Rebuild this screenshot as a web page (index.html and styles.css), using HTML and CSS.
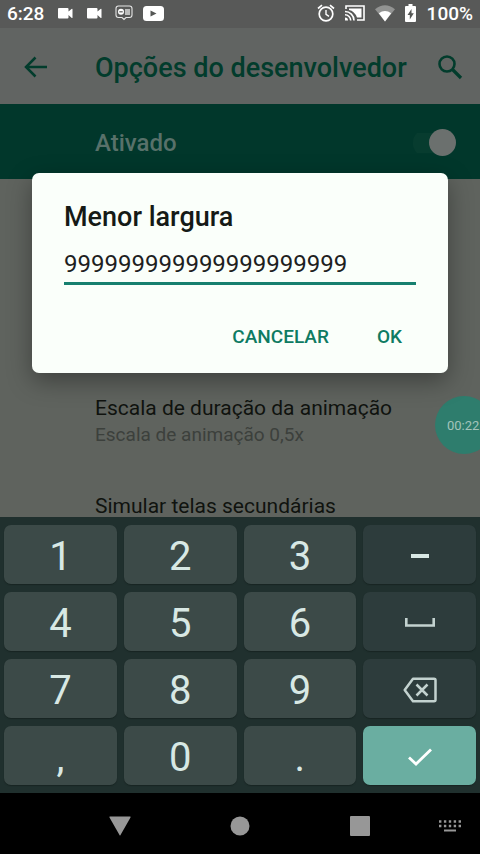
FILE: index.html
```html
<!DOCTYPE html>
<html lang="pt-BR">
<head>
<meta charset="utf-8">
<meta name="viewport" content="width=device-width, initial-scale=1">
<title>Opções do desenvolvedor</title>
<link rel="stylesheet" href="styles.css">
</head>
<body>
<div class="screen">
  <header class="status">
    <span class="clock">6:28</span>
    <svg class="cam" viewBox="0 0 15 11" width="15" height="11"><path d="M1 0h8.500q1 0 1 1v2.500L13.500 1q1-.6 1 .4v8q0 1-1 .4L10.500 7v2.500q0 1-1 1H1q-1 0-1-1V1q0-1 1-1z" fill="currentColor"/></svg>
    <svg class="cam" viewBox="0 0 15 11" width="15" height="11"><path d="M1 0h8.500q1 0 1 1v2.500L13.500 1q1-.6 1 .4v8q0 1-1 .4L10.500 7v2.500q0 1-1 1H1q-1 0-1-1V1q0-1 1-1z" fill="currentColor"/></svg>
    <svg class="chat" viewBox="0 0 18 16" width="18" height="16"><path d="M3.500 1h11Q17 1 17 3.500v6.500q0 2.500-2.500 2.500h-3.500L9 14.500 7 12.500H3.500Q1 12.500 1 10V3.500Q1 1 3.500 1z" fill="none" stroke="currentColor" stroke-width="1.100" opacity=".85"/><circle cx="6" cy="6.800" r="3" fill="currentColor"/><path d="M4.300 6.800h3.400" stroke="#585a58" stroke-width="1.200"/><path d="M10 5h5M10 7h5M10 9h5" stroke="currentColor" stroke-width="1.400" opacity=".8"/></svg>
    <svg class="tube" viewBox="0 0 21 15" width="21" height="15"><rect width="21" height="15" rx="3.500" fill="currentColor"/><path d="M7.500 4.500v6l6-3z" fill="#555755"/></svg>
    <span class="spacer"></span>
    <svg viewBox="0 0 18 18" width="18" height="18"><g fill="none" stroke="currentColor"><circle cx="9" cy="10" r="6.800" stroke-width="1.700"/><path d="M9 6v4.300l3 2" stroke-width="1.400"/><path d="M1 4.500L5 1.200M17 4.500L13 1.200" stroke-width="1.700"/></g></svg>
    <svg class="cast" viewBox="0 0 20 16" width="20" height="16"><g fill="none" stroke="currentColor" stroke-width="1.600"><path d="M1 4V1h18v14h-7"/><path d="M0 6.500A9 9 0 0 1 9 15.500M0 9.800A5.700 5.700 0 0 1 5.700 15.500"/></g><path d="M0 12.500A3 3 0 0 1 3 15.500H0zM4 3.500h12.500v9H12Q9.500 6 4 5z" fill="currentColor"/></svg>
    <svg class="wifi" viewBox="0 0 20 17" width="20" height="17"><path d="M0 4.200Q10-3.500 20 4.200L10 16.500z" fill="currentColor" opacity=".35"/><path d="M3.800 8.200Q10 4 16.200 8.200L10 16.500z" fill="currentColor"/></svg>
    <svg class="battery" viewBox="0 0 11 18" width="11" height="18"><path d="M3.500 0h4v2H10q1 0 1 1v14q0 1-1 1H1q-1 0-1-1V3q0-1 1-1h2.500z" fill="currentColor"/><path d="M6.500 5L2.500 11h2.300v4.500l4-6.200H6.500z" fill="#555755"/></svg>
    <span class="level">100%</span>
  </header>

  <main class="app">
    <div class="toolbar">
      <button class="icon-button" aria-label="Voltar"><svg viewBox="0 0 24 22" width="24" height="22"><path d="M23 11H2.500M11.500 1.500L2 11l9.500 9.500" fill="none" stroke="currentColor" stroke-width="2.500"/></svg></button>
      <h1>Opções do desenvolvedor</h1>
      <button class="icon-button" aria-label="Pesquisar"><svg viewBox="0 0 26 26" width="26" height="26"><circle cx="10" cy="10" r="7.500" fill="none" stroke="currentColor" stroke-width="2.600"/><path d="M15 15l9 9" stroke="currentColor" stroke-width="3.200"/></svg></button>
    </div>
    <div class="master">
      <label for="enabled">Ativado</label>
      <input id="enabled" class="switch" type="checkbox" role="switch" checked>
    </div>
    <ul class="options">
      <li><span class="name">Escala de duração da animação</span><span class="value">Escala de animação 0,5x</span></li>
      <li><span class="name">Simular telas secundárias</span></li>
    </ul>
    <div class="timer">00:22</div>
    <div class="overlay">
      <form class="dialog" role="dialog" aria-labelledby="width-label">
        <label id="width-label" for="width">Menor largura</label>
        <input id="width" class="field" type="text" inputmode="numeric" value="999999999999999999999">
        <div class="actions">
          <button type="button">CANCELAR</button>
          <button type="button">OK</button>
        </div>
      </form>
    </div>
  </main>

  <section class="keyboard" aria-label="Teclado">
    <button>1</button><button>2</button><button>3</button>
    <button class="side" aria-label="Hífen"><svg viewBox="0 0 18 4" width="18" height="4"><path d="M0 2h18" stroke="#d8e8e4" stroke-width="4"/></svg></button>
    <button>4</button><button>5</button><button>6</button>
    <button class="side" aria-label="Espaço"><svg viewBox="0 0 30 9" width="30" height="9"><path d="M1.300 0v7.500h27.400V0" fill="none" stroke="currentColor" stroke-width="2.600"/></svg></button>
    <button>7</button><button>8</button><button>9</button>
    <button class="side" aria-label="Apagar"><svg viewBox="0 0 34 26" width="34" height="26"><path d="M10 1.700h21q1.500 0 1.500 1.500v19.600q0 1.500-1.500 1.500H10L1.700 13z" fill="none" stroke="currentColor" stroke-width="2.500" stroke-linejoin="round"/><path d="M13.500 7.500l11 11M24.500 7.500l-11 11" stroke="currentColor" stroke-width="2.500"/></svg></button>
    <button>,</button><button>0</button><button>.</button>
    <button class="enter" aria-label="Concluir"><svg viewBox="0 0 24 18" width="24" height="18"><path d="M1 9.500l7 6.500L23 1.500" fill="none" stroke="currentColor" stroke-width="2.800"/></svg></button>
  </section>

  <nav class="navbar">
    <button class="back" aria-label="Voltar"><svg viewBox="0 0 22 20" width="22" height="20"><path d="M1 .5h20q1 0 .5 1L11.500 19q-.5 1-1 0L.5 1.500Q0 .5 1 .5z" fill="currentColor"/></svg></button>
    <button aria-label="Início"><svg viewBox="0 0 20 20" width="20" height="20"><circle cx="10" cy="10" r="9.500" fill="currentColor"/></svg></button>
    <button aria-label="Recentes"><svg viewBox="0 0 20 20" width="20" height="20"><rect width="20" height="20" rx="1" fill="currentColor"/></svg></button>
    <button aria-label="Alternar teclado"><svg viewBox="0 0 22 12" width="22" height="12"><path d="M0 1.500h22M0 6h22" stroke="currentColor" stroke-width="2.400" stroke-dasharray="2.400 2.500"/><path d="M5 10.500h12" stroke="currentColor" stroke-width="2"/></svg></button>
  </nav>
</div>
</body>
</html>
```
FILE: styles.css
```css
* {
  box-sizing: border-box;
}

body {
  margin: 0;
  background: #000;
  font-family: Roboto, "Liberation Sans", sans-serif;
}

button {
  padding: 0;
  border: 0;
  background: none;
  color: inherit;
  font: inherit;
}

svg {
  display: block;
  flex: none;
}

.screen {
  display: flex;
  flex-direction: column;
  height: 100vh;
}

.status {
  display: flex;
  align-items: center;
  height: 28px;
  padding: 0 7px;
  background: #585958;
  color: #fff;
  font-size: 19px;
  font-weight: 500;
  line-height: 26px;
}

.status svg {
  margin-bottom: 2px;
}

.cam {
  margin-left: 14px;
}

.chat {
  margin-left: 13px;
}

.tube {
  margin-left: 10px;
}

.spacer {
  flex: 1;
}

.cast,
.wifi,
.battery {
  margin-left: 10px;
}

.level {
  margin-left: 11px;
}

.app {
  position: relative;
  flex: 1;
  min-height: 0;
  overflow: hidden;
  background: #5f635e;
}

.toolbar {
  display: flex;
  align-items: center;
  height: 76px;
  padding: 2px 17px 0 24px;
  background: #616462;
  color: #023c2c;
}

.toolbar h1 {
  flex: 1;
  margin: 0 0 0 47px;
  padding-top: 2px;
  font-size: 27px;
  font-weight: 500;
  line-height: 32px;
  white-space: nowrap;
}

.master {
  display: flex;
  align-items: center;
  justify-content: space-between;
  height: 75px;
  padding: 2px 24px 0 95px;
  background: #01372b;
  color: #58716a;
  font-size: 24px;
  font-weight: 500;
}

.switch {
  display: flex;
  align-items: center;
  justify-content: flex-end;
  width: 43px;
  height: 28px;
  margin: 0;
  appearance: none;
  background: linear-gradient(#073c2f, #073c2f) left center / 36px 20px no-repeat;
  border-radius: 14px;
}

.switch::before {
  content: "";
  width: 27px;
  height: 27px;
  border-radius: 50%;
  background: #6b706e;
}

.options {
  margin: 0;
  padding: 214px 24px 0 95px;
  list-style: none;
}

.options li {
  display: flex;
  flex-direction: column;
  margin-bottom: 44px;
}

.name {
  color: #10130f;
  font-size: 21px;
  line-height: 30px;
}

.value {
  color: #3c403c;
  font-size: 19px;
  line-height: 24px;
}

.timer {
  position: absolute;
  top: 368px;
  right: -13px;
  width: 58px;
  height: 58px;
  padding-left: 12px;
  border-radius: 50%;
  background: #2e7d6d;
  color: #a3c4bb;
  font-size: 13px;
  line-height: 60px;
}

.overlay {
  position: absolute;
  inset: 0;
  display: flex;
  align-items: center;
  padding: 0 32px;
}

.dialog {
  flex: 1;
  min-width: 0;
  padding: 24px 32px 12px;
  border-radius: 7px;
  background: #fafffa;
  box-shadow: 0 8px 24px rgba(0, 0, 0, 0.35);
}

.dialog label {
  display: block;
  color: #151a16;
  font-size: 27px;
  font-weight: 500;
  line-height: 40px;
}

.field {
  display: block;
  width: 100%;
  height: 48px;
  padding: 10px 0 0;
  border: 0;
  border-bottom: 3px solid #16806f;
  border-radius: 0;
  outline: 0;
  background: none;
  color: #1d211e;
  font: 24px Roboto, "Liberation Sans", sans-serif;
}

.actions {
  display: flex;
  justify-content: flex-end;
  gap: 24px;
  padding: 28px 2px 0 0;
  color: #0e7b62;
  font-size: 19px;
  font-weight: 500;
}

.actions button {
  height: 48px;
  padding: 0 12px;
}

.keyboard {
  display: grid;
  grid-template-columns: repeat(4, 1fr);
  grid-auto-rows: 59px;
  gap: 8px 7px;
  padding: 8px 4px;
  background: #20302e;
  color: #d8e8e4;
  font-size: 40px;
}

.keyboard button {
  display: flex;
  align-items: center;
  justify-content: center;
  padding-top: 4px;
  border-radius: 7px;
  background: #3c4a48;
  box-shadow: 0 1px 1px #182523;
}

.keyboard .side {
  background: #2d3c3c;
  color: #c3d2cf;
}

.keyboard .enter {
  background: #6aaea1;
  color: #fff;
}

.keyboard .side,
.keyboard .enter {
  padding-top: 2px;
}

.navbar {
  display: grid;
  grid-template-columns: 2fr 2fr 2fr 1fr;
  height: 61px;
  padding: 4px 0 0 calc(100% / 8);
  background: #000;
  color: #979797;
}

.navbar button {
  display: flex;
  align-items: center;
  justify-content: center;
}
```
